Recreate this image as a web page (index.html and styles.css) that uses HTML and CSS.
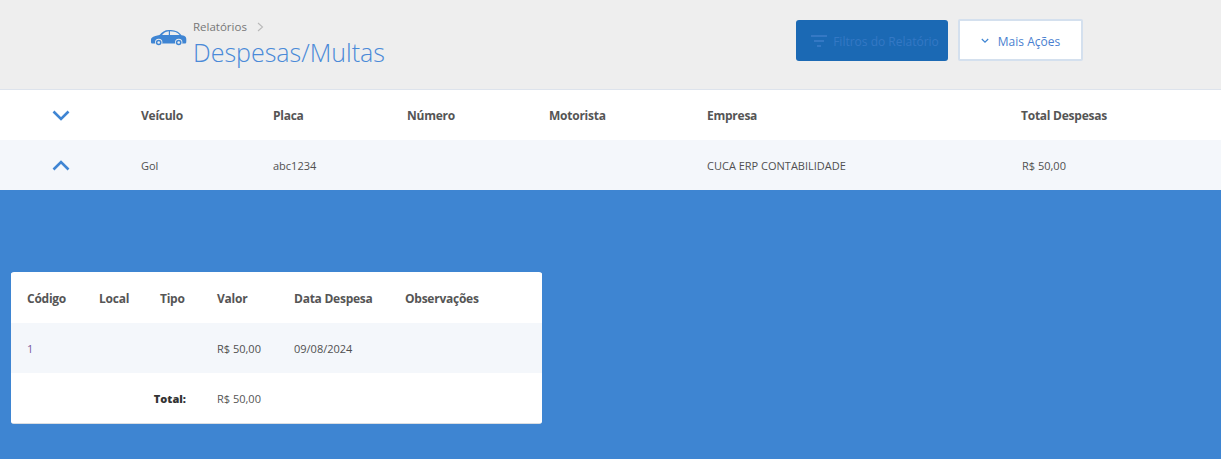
FILE: index.html
```html
<!DOCTYPE html>
<html lang="pt-BR">
<head>
<meta charset="utf-8">
<title>Despesas/Multas</title>
<link rel="stylesheet" href="styles.css">
</head>
<body>
<header class="topbar">
  <div class="heading">
    <svg class="car" viewBox="0 0 36 17" width="36" height="17" aria-hidden="true">
      <path fill="#3f85d3" d="M0 11C0 8.500 2 7.200 8.500 6 11 3 13.500 1 18 1c5 0 9 .8 12.500 5.200 2.500.4 4 1 4.500 2.300.4 1.200.4 3.500.2 5-.1.700-.6 1-1.200 1H1.500C.6 14.500 0 14 0 13z"/>
      <path fill="#eeeeee" d="M11 6c1.500-2 3.500-3.500 6.800-3.800V6zM19 2.200c4 0 7.500.8 9.700 3.800H19z"/>
      <circle cx="7.700" cy="13.500" r="3.700" fill="#eeeeee"/><circle cx="7.700" cy="13.500" r="2.800" fill="#3f85d3"/><circle cx="7.700" cy="13.500" r="1.300" fill="#eeeeee"/>
      <circle cx="27.700" cy="13.500" r="3.700" fill="#eeeeee"/><circle cx="27.700" cy="13.500" r="2.800" fill="#3f85d3"/><circle cx="27.700" cy="13.500" r="1.300" fill="#eeeeee"/>
    </svg>
    <div class="titles">
      <div class="crumb"><span>Relatórios</span>
        <svg class="crumb-arrow" viewBox="0 0 7 10" width="7" height="10" aria-hidden="true"><path d="M1 1l4.500 4L1 9" fill="none" stroke="#b9b9b9" stroke-width="1.100"/></svg>
      </div>
      <h1>Despesas/Multas</h1>
    </div>
  </div>
  <div class="actions">
    <button class="btn-filter" type="button">
      <svg viewBox="0 0 16 12" width="16" height="12" aria-hidden="true"><path d="M0 1h16M3 6h10M6 11h4" stroke="#3478c4" stroke-width="2" fill="none"/></svg>
      Filtros do Relatório
    </button>
    <button class="btn-more" type="button">
      <svg viewBox="0 0 8 6" width="8" height="6" aria-hidden="true"><path d="M.8 1l3.200 3.200L7.200 1" fill="none" stroke="#3f85d3" stroke-width="1.200"/></svg>
      Mais Ações
    </button>
  </div>
</header>

<div class="row row-head main-cols">
  <div class="toggle"><svg viewBox="0 0 18 11" width="18" height="11" aria-hidden="true"><path d="M1.500 1.500L9 9l7.500-7.500" fill="none" stroke="#3f85d3" stroke-width="2.600"/></svg></div>
  <div>Veículo</div><div>Placa</div><div>Número</div><div>Motorista</div><div>Empresa</div><div>Total Despesas</div>
</div>
<div class="row row-body main-cols">
  <div class="toggle"><svg viewBox="0 0 18 11" width="18" height="11" aria-hidden="true"><path d="M1.500 9.500L9 2l7.500 7.500" fill="none" stroke="#3f85d3" stroke-width="2.600"/></svg></div>
  <div>Gol</div><div>abc1234</div><div></div><div></div><div>CUCA ERP CONTABILIDADE</div><div class="total-value">R$ 50,00</div>
</div>

<main class="detail">
  <section class="card">
    <div class="row row-head sub-cols"><div>Código</div><div>Local</div><div>Tipo</div><div>Valor</div><div>Data Despesa</div><div>Observações</div></div>
    <div class="row row-body sub-cols"><div class="code">1</div><div></div><div></div><div>R$ 50,00</div><div>09/08/2024</div><div></div></div>
    <div class="row row-total sub-cols"><div></div><div></div><div class="total-label">Total:</div><div>R$ 50,00</div><div></div><div></div></div>
  </section>
</main>
</body>
</html>
```
FILE: styles.css
```css
* { box-sizing: border-box; }
html, body { margin: 0; height: 100%; }
body {
  display: flex;
  flex-direction: column;
  height: 459px;
  overflow: hidden;
  font-family: "Open Sans", sans-serif;
  font-size: 11px;
  color: #555;
  background: #fff;
}
.topbar {
  height: 90px;
  flex: none;
  display: flex;
  justify-content: space-between;
  align-items: flex-start;
  padding: 19px 138px 0 151px;
  background: #eeeeee;
  border-bottom: 1px solid #dde3ec;
}
.heading { display: flex; align-items: flex-start; gap: 6px; }
.car { margin-top: 10px; }
.titles { margin-top: -1px; }
.crumb { display: flex; align-items: center; gap: 10px; height: 17px; font-size: 11.500px; color: #777; }
h1 {
  margin: 0;
  font-size: 25px;
  line-height: 34px;
  font-weight: 300;
  color: #4a8ad8;
}
.actions { display: flex; gap: 10px; }
.actions button {
  height: 41px;
  font: inherit;
  font-size: 12px;
  display: flex;
  align-items: center;
  justify-content: center;
  padding: 0;
}
.btn-filter {
  width: 152px;
  gap: 6px;
  margin-top: 1px;
  border: 0;
  border-radius: 3px;
  background: #1b69b4;
  color: #3478c4;
}
.actions .btn-filter { padding-left: 6px; padding-top: 1px; }
.btn-more {
  width: 125px;
  gap: 9px;
  border: 2px solid #d4e0ee;
  border-radius: 2px;
  background: #fff;
  color: #4a7fd0;
}
.actions .btn-more { height: 42px; padding-top: 2px; }
.row { display: grid; height: 50px; align-items: center; }
.main-cols { grid-template-columns: 141px 132px 134px 142px 158px 314px 1fr; flex: none; }
.sub-cols { grid-template-columns: 72px 61px 57px 77px 111px 1fr; padding-left: 16px; }
.row-head { font-weight: 700; font-size: 12px; letter-spacing: -0.25px; color: #555; background: #fff; }
.row-body { background: #f4f7fb; color: #505050; }
.row-total { background: #fff; }
.total-value { padding-left: 1px; }
.toggle { display: flex; justify-content: center; padding-right: 20px; }
.toggle svg { display: block; }
.detail {
  flex: 1;
  background: #3e85d2;
  padding: 82px 0 0 11px;
}
.card {
  width: 531px;
  padding-top: 1px;
  background: #fff;
  border-radius: 3px;
  border-bottom: 1px solid #d9dde2;
  overflow: hidden;
}
.code { color: #7a5a9c; }
.total-label { font-weight: 800; color: #333; text-align: right; padding-right: 31px; margin-left: -40px; }
```
